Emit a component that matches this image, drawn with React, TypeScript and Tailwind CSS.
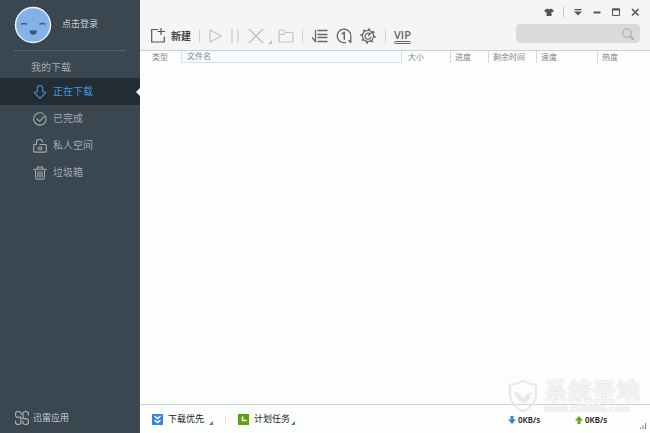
import type { ReactNode } from "react";

const stroke = {
  fill: "none",
  stroke: "currentColor",
  strokeWidth: 1.1,
  strokeLinecap: "round" as const,
  strokeLinejoin: "round" as const,
};

function Avatar() {
  return (
    <svg viewBox="0 0 38 38" className="w-[38px] h-[38px] shrink-0" aria-hidden="true">
      <circle cx="19" cy="19" r="17.5" fill="#82b2e8" stroke="#eef4fa" strokeWidth="1.4" />
      <path d="M7.500 18q2.500-1 5 0M26 18q2.500-1 5 0" fill="none" stroke="#3b5c82" strokeWidth="1.500" strokeLinecap="round" />
      <path d="M15.500 24.500h7.500q-.3 4.200-3.700 4.200t-3.800-4.200z" fill="#36577a" />
    </svg>
  );
}

function DownloadIcon() {
  return (
    <svg viewBox="0 0 14 14" className="w-3.5 h-3.5" {...stroke} aria-hidden="true">
      <path d="M4.300 7V3a2.700 2.500 0 0 1 5.400 0v4h1.800q1.300.3.500 1.300L7 13.300 2 8.300Q1.200 7.300 2.500 7z" />
    </svg>
  );
}

function DoneIcon() {
  return (
    <svg viewBox="0 0 14 14" className="w-3.5 h-3.5" {...stroke} aria-hidden="true">
      <path d="M12.800 5A6.200 6.200 0 1 1 10.500 1.900" />
      <path d="M4 6.800l2.500 2.500L12.300 3.500" />
    </svg>
  );
}

function LockIcon() {
  return (
    <svg viewBox="0 0 14 14" className="w-3.5 h-3.5" {...stroke} aria-hidden="true">
      <path d="M3.500 5.500V3.700a3 3 0 0 1 6-.9M3.500 5.500H1.500a.8.800 0 0 0-.8.800v6a.8.800 0 0 0 .8.800h11a.8.800 0 0 0 .8-.8v-6a.8.800 0 0 0-.8-.8H7" />
      <ellipse cx="7" cy="9.300" rx="2" ry="1.300" />
    </svg>
  );
}

function TrashIcon() {
  return (
    <svg viewBox="0 0 14 14" className="w-3.5 h-3.5" {...stroke} aria-hidden="true">
      <path d="M.8 3.200h12.400M4.500 3V1h5v2M2.300 3.500l.5 8.800q.1.900 1 .9h6.400q.9 0 1-.9l.5-8.800M5 5.500v5.500M7 5.500v5.500M9 5.500v5.500" />
    </svg>
  );
}

function AppsIcon() {
  return (
    <svg viewBox="0 0 14 14" className="w-3.5 h-3.5 shrink-0" {...stroke} strokeWidth={1} aria-hidden="true">
      <path d="M6 3.500V2A1.300 1.300 0 0 0 4.700.700H2A1.300 1.300 0 0 0 .700 2v3A1.300 1.300 0 0 0 2 6.200h4V12A1.300 1.300 0 0 1 4.700 13.300H2A1.300 1.300 0 0 1 .700 12V10" />
      <path d="M8 10.500v1.500A1.300 1.300 0 0 0 9.300 13.300H12a1.300 1.300 0 0 0 1.300-1.300V9A1.300 1.300 0 0 0 12 7.800H8V2A1.300 1.300 0 0 1 9.300.700H12A1.300 1.300 0 0 1 13.300 2v2" />
    </svg>
  );
}

interface NavItem {
  label: string;
  icon: ReactNode;
  active?: boolean;
}

const navItems: NavItem[] = [
  { label: "正在下载", icon: <DownloadIcon />, active: true },
  { label: "已完成", icon: <DoneIcon /> },
  { label: "私人空间", icon: <LockIcon /> },
  { label: "垃圾箱", icon: <TrashIcon /> },
];

function Sidebar() {
  return (
    <aside className="flex w-[140px] shrink-0 flex-col bg-[#3a4650] text-[#a3abb1]">
      <div className="mx-3.5 flex h-[51px] items-center gap-2 border-b border-[#56616a]">
        <Avatar />
        <button className="pl-[2px] text-[9px] text-[#c9ced2] whitespace-nowrap">点击登录</button>
      </div>
      <h2 className="h-[27px] pt-[3px] pl-[31px] text-[10px] leading-[27px]">我的下载</h2>
      <nav>
        {navItems.map((item) => (
          <a
            key={item.label}
            href="#"
            className={`relative flex h-[27px] items-center gap-1.5 pl-[33px] text-[10px] ${
              item.active ? "bg-[#222d35] text-[#4a94e0]" : ""
            }`}
          >
            {item.icon}
            {item.label}
            {item.active && (
              <span className="absolute right-0 top-1/2 -translate-y-1/2 border-y-4 border-r-4 border-y-transparent border-r-white" />
            )}
          </a>
        ))}
      </nav>
      <button className="mt-auto mb-[7px] flex items-center gap-1 pl-[15px] text-[9px] leading-4 text-[#c3c9ce]">
        <AppsIcon />
        迅雷应用
      </button>
    </aside>
  );
}

function WindowControls() {
  return (
    <div className="flex h-6 items-center justify-end gap-[9px] pr-2.5 text-[#555]">
      <button aria-label="皮肤">
        <svg viewBox="0 0 10 10" className="w-2.5 h-2.5" fill="currentColor" aria-hidden="true">
          <path d="M3 1.500q2 1.500 4 0L9.800 3.500 8.500 5.500 7.500 5v4h-5V5l-1 .5L.2 3.500z" />
        </svg>
      </button>
      <span className="h-2.5 w-px bg-[#c8c8c8]" />
      <button aria-label="菜单">
        <svg viewBox="0 0 10 10" className="w-2.5 h-2.5" fill="currentColor" aria-hidden="true">
          <path d="M1.500 2h7v1.200h-7zM1 4.500h8L5 8.500z" />
        </svg>
      </button>
      <button aria-label="最小化">
        <svg viewBox="0 0 10 10" className="w-2.5 h-2.5" fill="currentColor" aria-hidden="true">
          <path d="M1.500 4.500h7v2h-7z" />
        </svg>
      </button>
      <button aria-label="最大化">
        <svg viewBox="0 0 10 10" className="w-2.5 h-2.5" aria-hidden="true">
          <path d="M1.500 2h7v6.500h-7z" fill="none" stroke="currentColor" />
          <path d="M1 1.500h8v2H1z" fill="currentColor" />
        </svg>
      </button>
      <button aria-label="关闭">
        <svg viewBox="0 0 10 10" className="w-2.5 h-2.5" aria-hidden="true">
          <path d="M2 2l6.500 6.500M8.500 2L2 8.500" stroke="currentColor" strokeWidth="1.600" />
        </svg>
      </button>
    </div>
  );
}

function CornerMark() {
  return (
    <svg viewBox="0 0 4 4" className="w-1 h-1" fill="currentColor" aria-hidden="true">
      <path d="M4 0v4H0z" />
    </svg>
  );
}

function Separator() {
  return <span className="h-3.5 w-px bg-[#cfd1d2]" />;
}

function Toolbar() {
  return (
    <div className="flex h-6 items-center pl-[11px] pr-2.5 text-[#666]">
      <button className="flex items-center gap-1.5 text-[10px] font-bold text-[#444]">
        <svg viewBox="0 0 14 16" className="h-4 w-3.5" fill="none" stroke="#555" strokeWidth="1.200" aria-hidden="true">
          <path d="M7 1.500H.700v12.500h12.600V8.500M10 0v7M6.500 3.500h7.500" />
        </svg>
        新建
      </button>
      <div className="ml-2 flex items-center text-[#bfc1c2]">
        <Separator />
        <button aria-label="开始" className="ml-[9px]">
          <svg viewBox="0 0 14 16" className="h-4 w-3.5" {...stroke} aria-hidden="true">
            <path d="M1 2l11.500 6L1 14z" />
          </svg>
        </button>
        <button aria-label="暂停" className="ml-2">
          <svg viewBox="0 0 8 16" className="h-4 w-2" {...stroke} aria-hidden="true">
            <path d="M1 1.500v13M7 1.500v13" />
          </svg>
        </button>
        <button aria-label="删除" className="ml-[9px] flex items-end gap-1">
          <svg viewBox="0 0 16 16" className="h-4 w-4" {...stroke} strokeWidth={1.4} aria-hidden="true">
            <path d="M1.500 1.500l13 13M14.500 1.500l-13 13" />
          </svg>
          <CornerMark />
        </button>
        <button aria-label="打开文件夹" className="ml-1.5">
          <svg viewBox="0 0 16 16" className="h-4 w-4" {...stroke} aria-hidden="true">
            <path d="M1 13.500V3.500Q1 2 2.500 2h3Q6.500 2 7 3.500L7.500 4.500h6.500q1 0 1 1V13q0 1-1 1H1.500M1 6.500h4.500l2-2" />
          </svg>
        </button>
        <span className="w-2" />
        <Separator />
      </div>
      <button aria-label="排序" className="ml-2">
        <svg viewBox="0 0 18 16" className="h-4 w-[18px]" fill="none" stroke="currentColor" strokeWidth="1.300" aria-hidden="true">
          <path d="M4.500 2v11.500L1 9.500M6.500 2.500h10M6.500 6.500h10M6.500 9.500h10M6.500 13.500h10" />
        </svg>
      </button>
      <button aria-label="单任务" className="ml-1.5">
        <svg viewBox="0 0 18 16" className="h-4 w-[18px]" {...stroke} strokeWidth={1.3} aria-hidden="true">
          <path d="M10.500 14.500A6.800 6.800 0 1 1 15.800 8v6.500l-2-2" />
          <path d="M7.300 5.700l2-1.400v7" strokeWidth="1.500" />
        </svg>
      </button>
      <button aria-label="设置" className="ml-1.5">
        <svg viewBox="0 0 18 16" className="h-4 w-[18px]" fill="none" stroke="currentColor" aria-hidden="true">
          <circle cx="9" cy="8" r="5.600" strokeWidth="1.200" />
          <circle cx="9" cy="8" r="6.900" strokeWidth="1.600" strokeDasharray="1.800 3.619" />
          <path d="M10.800 5.800A3 3 0 1 0 12 8.500M9 8l4.500-4.500" strokeWidth="1.200" />
        </svg>
      </button>
      <span className="w-2" />
      <Separator />
      <button aria-label="VIP" className="ml-2">
        <span className="block text-center font-['Open_Sans',sans-serif] text-[11px] leading-3 font-semibold">VIP</span>
        <span className="block h-[3px] w-[17px] rounded-xs border border-[#666]" />
      </button>
      <label className="ml-auto flex h-[19px] w-[124px] items-center self-start rounded-sm bg-[#dadada] pr-1.5">
        <input type="text" aria-label="搜索" className="min-w-0 flex-1 bg-transparent px-1.5 text-[10px] outline-none" />
        <svg viewBox="0 0 12 12" className="h-3 w-3 text-[#aaa]" {...stroke} aria-hidden="true">
          <circle cx="5" cy="5" r="4.200" />
          <path d="M8.300 8.300l2.700 2.700" strokeWidth="1.800" />
        </svg>
      </label>
    </div>
  );
}

const columns = [
  { label: "类型", style: "w-[41px] pl-3" },
  { label: "文件名", style: "border-x border-b border-[#cfe3ef] bg-[#f7fbfe] pl-[5px]" },
  { label: "大小", style: "w-[48px] pl-1.5" },
  { label: "进度", style: "w-[38px] border-l border-[#d5d9dc] pl-1" },
  { label: "剩余时间", style: "w-[48px] border-l border-[#d5d9dc] pl-1" },
  { label: "速度", style: "w-[61px] border-l border-[#d5d9dc] pl-1" },
  { label: "热度", style: "w-[53px] border-l border-[#d5d9dc] pl-1" },
];

function TaskTable() {
  return (
    <div className="flex-1 bg-[#fcfdfd]">
      <table className="w-full table-fixed border-separate border-spacing-0 border-t border-[#ccd0d2] text-[8px] leading-[11px] text-[#858585]">
        <thead>
          <tr>
            {columns.map((col) => (
              <th key={col.label} className={`whitespace-nowrap p-0 text-left font-normal ${col.style}`}>
                {col.label}
              </th>
            ))}
          </tr>
        </thead>
        <tbody />
      </table>
    </div>
  );
}

function StatusBar() {
  return (
    <footer className="flex h-[29px] items-center border-t border-[#cfd1d2] bg-[#fcfdfd] pl-3 pr-1 pt-px text-[9px] text-[#222]">
      <button className="flex items-center gap-[5px]">
        <svg viewBox="0 0 11 11" className="h-[11px] w-[11px]" aria-hidden="true">
          <path d="M0 0h11v11H0z" fill="#3584dc" />
          <path d="M2.500 2l3 2.500 3-2.500M2.500 6l3 2.500 3-2.500" fill="none" stroke="#fff" strokeWidth="1.500" />
        </svg>
        下载优先
        <span className="pt-1.5 text-[#777]"><CornerMark /></span>
      </button>
      <span className="mx-3 h-2.5 w-px bg-[#e3e5e6]" />
      <button className="flex items-center gap-[5px]">
        <svg viewBox="0 0 11 11" className="h-[11px] w-[11px]" aria-hidden="true">
          <path d="M0 0h11v11H0z" fill="#5da010" />
          <path d="M4.500 2.500v4h4" fill="none" stroke="#fff" strokeWidth="1.500" />
        </svg>
        计划任务
        <span className="-ml-1 pt-1.5 text-[#777]"><CornerMark /></span>
      </button>
      <div className="ml-auto flex w-[67px] items-center gap-0.5 font-['Noto_Sans',sans-serif] text-[8px] font-semibold">
        <svg viewBox="0 0 8 8" className="h-2 w-2" fill="#3584dc" aria-hidden="true">
          <path d="M2.500 0h3v3.500H8L4 8 0 3.500h2.500z" />
        </svg>
        0KB/s
      </div>
      <div className="flex w-[65px] items-center gap-0.5 font-['Noto_Sans',sans-serif] text-[8px] font-semibold">
        <svg viewBox="0 0 8 8" className="h-2 w-2" fill="#6aa51c" aria-hidden="true">
          <path d="M2.500 8h3V4.500H8L4 0 0 4.500h2.500z" />
        </svg>
        0KB/s
      </div>
      <svg viewBox="0 0 6 6" className="mb-1 h-1.5 w-1.5 self-end" fill="#777" aria-hidden="true">
        <path d="M0 4.500h1V6H0zM2.500 2.500h1V6h-1zM5 0h1v6H5z" />
      </svg>
    </footer>
  );
}

function Watermark() {
  return (
    <div className="pointer-events-none absolute bottom-5 right-2.5 flex items-center gap-1.5 text-[#f3f4f4]">
      <svg viewBox="0 0 30 34" className="h-[34px] w-[30px]" fill="none" stroke="#e6e8e8" strokeWidth="2" aria-hidden="true">
        <path d="M15 1.500Q21 5.500 28 5.500V17Q27 27 15 32.500 3 27 2 17V5.500Q9 5.500 15 1.500z" />
        <path d="M6 13q7 1 9 6 3-5 10-6-1 3-4 4 1 1 2 1-3 6-9 6-6-4-8-11z" fill="#e9ebeb" stroke="none" />
      </svg>
      <div>
        <div className="text-2xl leading-[26px] font-medium [text-shadow:0_0_2px_#cccfcf]">系统圣地</div>
        <div className="font-['Liberation_Sans',sans-serif] text-[10px] leading-2 font-bold [text-shadow:0_0_1px_#d2d4d4]">
          www.xt3588s.com
        </div>
      </div>
    </div>
  );
}

export default function App() {
  return (
    <div className="relative flex h-screen font-['Liberation_Sans','Noto_Sans_CJK_SC',sans-serif]">
      <Sidebar />
      <main className="flex min-w-0 flex-1 flex-col">
        <header className="h-[50px] bg-[#f4f5f5]">
          <WindowControls />
          <Toolbar />
        </header>
        <TaskTable />
        <StatusBar />
      </main>
      <Watermark />
    </div>
  );
}
